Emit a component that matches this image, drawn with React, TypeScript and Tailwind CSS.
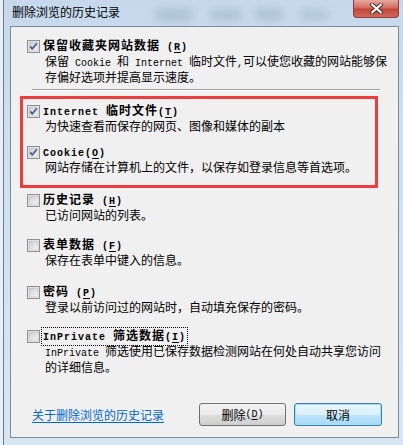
import type { ReactNode } from "react";

const cjk = "font-['Noto_Sans_CJK_SC',sans-serif]";

function M({ children, bold }: { children: ReactNode; bold?: boolean }) {
  return (
    <span
      className={`font-['Liberation_Mono','Noto_Sans_CJK_SC',monospace] text-[10px] ${
        bold ? "font-bold" : "font-normal tracking-normal"
      }`}
    >
      {children}
    </span>
  );
}

function Box({ checked }: { checked?: boolean }) {
  return (
    <svg width="13" height="13" viewBox="0 0 13 13" className="shrink-0">
      <defs>
        <linearGradient id="cbfill" x1="0" y1="0" x2="1" y2="1">
          <stop offset="0" stopColor="#c9ccd1" />
          <stop offset="1" stopColor="#f7f7f7" />
        </linearGradient>
      </defs>
      <rect x="0.5" y="0.5" width="12" height="12" fill="#f4f4f4" stroke="#8e8f8f" />
      <rect x="2" y="2" width="9" height="9" fill="url(#cbfill)" stroke="#b4b6ba" strokeWidth="0.6" />
      {checked && (
        <path
          d="M3.2 6.4 L5.3 8.9 L9.8 3.2"
          fill="none"
          stroke="#4b5f8e"
          strokeWidth="1.7"
          strokeLinejoin="round"
        />
      )}
    </svg>
  );
}

function Item({
  checked,
  label,
  desc,
  focus,
  className = "",
}: {
  checked?: boolean;
  label: ReactNode;
  desc: ReactNode;
  focus?: boolean;
  className?: string;
}) {
  return (
    <div className={className}>
      <div className="flex h-[16px] items-center">
        <Box checked={checked} />
        <span
          className={`ml-[2px] px-[1px] font-bold tracking-[1px] text-[12px] leading-[14px] text-black ${
            focus ? "outline outline-1 outline-dotted outline-black" : ""
          }`}
        >
          {label}
        </span>
      </div>
      <div className="pl-[18px] text-[12px] leading-[13px] text-black">{desc}</div>
    </div>
  );
}

function U({ children }: { children: ReactNode }) {
  return <span className="underline underline-offset-[2px]">{children}</span>;
}

export default function App() {
  return (
    <div className={`${cjk} h-[445px] w-[403px] overflow-hidden bg-[#e9eff6] pl-[3px]`}>
      <div className="relative flex h-full flex-col border-l border-[#6f7c8a] bg-[linear-gradient(180deg,#c6d9ec_0%,#cfe0f1_40%,#d8e6f4_100%)]">
        {/* blurred glass shapes */}
        <div className="absolute left-[150px] top-[8px] h-[14px] w-[40px] rounded-full bg-[#8fa5ba] opacity-40 blur-[4px]" />
        <div className="absolute left-[205px] top-[9px] h-[12px] w-[34px] rounded-full bg-[#8fa5ba] opacity-40 blur-[4px]" />
        <div className="absolute left-[250px] top-[8px] h-[13px] w-[30px] rounded-full bg-[#8fa5ba] opacity-40 blur-[4px]" />
        <div className="absolute left-[295px] top-[9px] h-[12px] w-[30px] rounded-full bg-[#8fa5ba] opacity-35 blur-[4px]" />

        <div className="relative flex h-[26px] items-start pl-[8px] pt-[4px] text-[12px] leading-[15px] text-black">
          删除浏览的历史记录
        </div>

        {/* close button */}
        <div className="absolute right-[4px] top-0 flex h-[18px] w-[46px] items-center justify-center rounded-b-[4px] border border-t-0 border-[#8d3f3f] bg-[linear-gradient(180deg,#e7a99f_0%,#d26d5f_45%,#c0473a_55%,#d4685a_100%)]">
          <svg width="13" height="11" viewBox="0 0 13 11">
            <path
              d="M2 1.5 L11 9.5 M11 1.5 L2 9.5"
              stroke="#4b2a2a"
              strokeWidth="4"
              strokeLinecap="round"
            />
            <path
              d="M2 1.5 L11 9.5 M11 1.5 L2 9.5"
              stroke="#ffffff"
              strokeWidth="2.2"
              strokeLinecap="round"
            />
          </svg>
        </div>

        <div className="relative ml-[6px] mr-[4px] flex h-[412px] flex-col border border-[#7b8a9a] bg-[#f0f0f0]">
          <div className="pl-[16px] pt-[11px]">
            <Item
              checked
              label={
                <>
                  保留收藏夹网站数据<M bold> (<U>R</U>)</M>
                </>
              }
              desc={
                <>
                  保留<M> Cookie </M>和<M> Internet </M>临时文件<M>,</M>可以使您收藏的网站能够保
                  <br />
                  存偏好选项并提高显示速度。
                </>
              }
            />
            <div className="ml-[5px] mt-[6px] w-[348px] border-t border-[#a0a0a0] shadow-[0_1px_0_#ffffff]" />
            <Item
              className="mt-[13px]"
              checked
              label={
                <>
                  <M bold>Internet </M>临时文件<M bold>(<U>T</U>)</M>
                </>
              }
              desc="为快速查看而保存的网页、图像和媒体的副本"
            />
            <Item
              className="mt-[12px]"
              checked
              label={
                <M bold>
                  Cookie(<U>O</U>)
                </M>
              }
              desc="网站存储在计算机上的文件，以保存如登录信息等首选项。"
            />
            <Item
              className="mt-[19px]"
              label={
                <>
                  历史记录<M bold> (<U>H</U>)</M>
                </>
              }
              desc="已访问网站的列表。"
            />
            <Item
              className="mt-[16px]"
              label={
                <>
                  表单数据<M bold> (<U>F</U>)</M>
                </>
              }
              desc="保存在表单中键入的信息。"
            />
            <Item
              className="mt-[18px]"
              label={
                <>
                  密码<M bold> (<U>P</U>)</M>
                </>
              }
              desc="登录以前访问过的网站时，自动填充保存的密码。"
            />
            <Item
              className="mt-[15px]"
              focus
              label={
                <>
                  <M bold>InPrivate </M>筛选数据<M bold>(<U>I</U>)</M>
                </>
              }
              desc={
                <>
                  <M>InPrivate </M>筛选使用已保存数据检测网站在何处自动共享您访问
                  <br />
                  的详细信息。
                </>
              }
            />
          </div>

          <div className="mt-auto flex items-center pb-[11px] pl-[21px] pr-[16px]">
            <a className="text-[12px] leading-[14px] text-[#0066cc] underline underline-offset-[2px]">
              关于删除浏览的历史记录
            </a>
            <div className="flex-1" />
            <button className="flex h-[23px] w-[87px] items-center justify-center rounded-[3px] border border-[#707070] bg-[linear-gradient(180deg,#f2f2f2_0%,#ebebeb_50%,#dddddd_50%,#cfcfcf_100%)] text-[12px] text-black">
              删除<M> (<U>D</U>)</M>
            </button>
            <button className="ml-[8px] flex h-[23px] w-[88px] items-center justify-center rounded-[3px] border border-[#3c7fb1] bg-[linear-gradient(180deg,#eaf6fd_0%,#d9f0fc_50%,#bee6fd_50%,#a7d9f5_100%)] text-[12px] text-black shadow-[inset_0_0_0_1px_#9fe0f8]">
              取消
            </button>
          </div>
        </div>

        {/* annotation highlight */}
        <div className="pointer-events-none absolute left-[16px] top-[96px] h-[92px] w-[358px] border-[3px] border-[#ee3b3b]" />
      </div>
    </div>
  );
}
